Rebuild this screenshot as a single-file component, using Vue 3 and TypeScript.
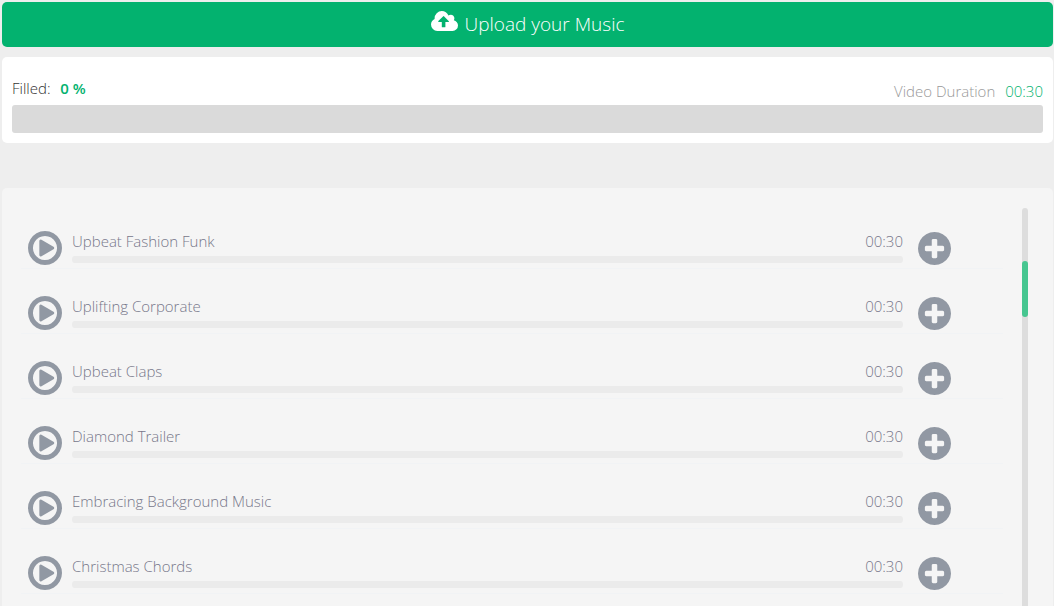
<script setup lang="ts">
interface Track {
  title: string
  duration: string
}

const filled = 0
const videoDuration = '00:30'
const tracks: Track[] = [
  { title: 'Upbeat Fashion Funk', duration: '00:30' },
  { title: 'Uplifting Corporate', duration: '00:30' },
  { title: 'Upbeat Claps', duration: '00:30' },
  { title: 'Diamond Trailer', duration: '00:30' },
  { title: 'Embracing Background Music', duration: '00:30' },
  { title: 'Christmas Chords', duration: '00:30' },
]
</script>

<template>
  <main class="page">
    <button type="button" class="upload">
      <svg class="upload-icon" viewBox="0 0 1920 1408" aria-hidden="true">
        <path
          d="M1280 736q0-14-9-23L919 361q-9-9-23-9t-23 9L522 712q-10 12-10 24 0 14 9 23t23 9h224v352q0 13 9.500 22.500T800 1152h192q13 0 22.500-9.500t9.500-22.500V768h224q13 0 22.500-9.500T1280 736zm640 288q0 159-112.500 271.500T1536 1408H448q-185 0-316.500-131.500T0 960q0-130 70-240t188-165q-2-30-2-43 0-212 150-362T768 0q156 0 285.500 87T1242 318q71-62 166-62 106 0 181 75t75 181q0 76-41 138 130 31 213.500 135.500T1920 1024z"
        />
      </svg>
      <span>Upload your Music</span>
    </button>

    <section class="summary">
      <div class="summary-head">
        <p class="filled">Filled: <strong>{{ filled }} %</strong></p>
        <p class="duration">Video Duration <span>{{ videoDuration }}</span></p>
      </div>
      <div class="meter" role="progressbar" aria-label="Filled" :aria-valuenow="filled">
        <div class="meter-fill" :style="{ width: filled + '%' }"></div>
      </div>
    </section>

    <section class="library">
      <ul class="tracks">
        <li v-for="track in tracks" :key="track.title" class="track">
          <button type="button" class="icon-button" :aria-label="'Play ' + track.title">
            <svg viewBox="0 0 1536 1536" aria-hidden="true">
              <path
                d="M1184 768q0 37-32 55l-544 320q-15 9-32 9-16 0-32-8-32-19-32-56V448q0-37 32-56 33-18 64 1l544 320q32 18 32 55zm128 0q0-148-73-273t-198-198-273-73-273 73-198 198-73 273 73 273 198 198 273 73 273-73 198-198 73-273zm224 0q0 209-103 385.500T1153.500 1433 768 1536t-385.500-103T103 1153.500 0 768t103-385.500T382.500 103 768 0t385.500 103T1433 382.500 1536 768z"
              />
            </svg>
          </button>
          <div class="track-body">
            <div class="track-text">
              <span>{{ track.title }}</span>
              <span>{{ track.duration }}</span>
            </div>
            <div class="track-bar"></div>
          </div>
          <button type="button" class="icon-button add" :aria-label="'Add ' + track.title">
            <svg viewBox="0 0 1536 1536" aria-hidden="true">
              <path
                d="M1216 832V704q0-26-19-45t-45-19H896V384q0-26-19-45t-45-19H704q-26 0-45 19t-19 45v256H384q-26 0-45 19t-19 45v128q0 26 19 45t45 19h256v256q0 26 19 45t45 19h128q26 0 45-19t19-45V896h256q26 0 45-19t19-45zm320-64q0 209-103 385.500T1153.500 1433 768 1536t-385.500-103T103 1153.500 0 768t103-385.500T382.500 103 768 0t385.500 103T1433 382.500 1536 768z"
              />
            </svg>
          </button>
        </li>
      </ul>
      <div class="scroll-track">
        <div class="scroll-thumb"></div>
      </div>
    </section>
  </main>
</template>

<style>
body {
  background: #eee;
}
</style>

<style scoped>
.page {
  box-sizing: border-box;
  display: flex;
  flex-direction: column;
  height: 100vh;
  padding: 2px 1px 0 2px;
  overflow: hidden;
  font-family: "Open Sans", "Noto Sans", sans-serif;
  font-size: 15px;
  font-weight: 300;
  line-height: 20px;
}

button {
  padding: 0;
  border: 0;
  font: inherit;
  cursor: pointer;
}

.upload {
  display: flex;
  flex: none;
  align-items: center;
  justify-content: center;
  gap: 7px;
  height: 45px;
  padding-bottom: 2px;
  border-radius: 5px;
  background: #03b26f;
  color: #fff;
  font-size: 19px;
}

.upload-icon {
  width: 27px;
  height: 20px;
  margin-bottom: 5px;
  fill: currentColor;
}

.summary {
  flex: none;
  margin-top: 10px;
  padding: 21px 10px 10px;
  border-radius: 5px;
  background: #fff;
}

.summary-head {
  display: flex;
  justify-content: space-between;
}

.summary p {
  margin: 0;
}

.filled {
  color: #333;
}

.filled strong {
  margin-left: 6px;
  color: #03b26f;
  font-weight: 600;
}

.summary .duration {
  padding-top: 3px;
  padding-bottom: 4px;
  color: #999;
}

.duration span {
  margin-left: 6px;
  color: #03b26f;
}

.meter {
  height: 28px;
  overflow: hidden;
  border-radius: 3px;
  background: #dadada;
}

.meter-fill {
  height: 100%;
  background: #03b26f;
}

.library {
  display: flex;
  flex: 1;
  align-items: stretch;
  min-height: 0;
  margin-top: 45px;
  padding: 16px 25px 0 19px;
  border-radius: 5px 5px 0 0;
  background: #f5f5f5;
}

.tracks {
  flex: 1;
  margin: 0;
  padding: 0;
  list-style: none;
}

.track {
  box-sizing: border-box;
  display: flex;
  align-items: flex-start;
  height: 65px;
  padding: 27px 52px 0 7px;
  border-bottom: 1px solid #f1f3f5;
}

.icon-button {
  flex: none;
  width: 34px;
  height: 34px;
  background: none;
  color: #9198a3;
}

.icon-button.add {
  width: 33px;
  height: 33px;
  margin-top: 1px;
}

.icon-button svg {
  display: block;
  width: 100%;
  fill: currentColor;
}

.track-body {
  flex: 1;
  margin: 0 15px 0 10px;
}

.track-text {
  display: flex;
  justify-content: space-between;
  height: 25px;
  color: #77778a;
}

.track-bar {
  height: 7px;
  border-radius: 3px;
  background: #ebebeb;
}

.scroll-track {
  flex: none;
  width: 6px;
  margin: 4px 0 0 19px;
  border-radius: 3px 3px 0 0;
  background: #ddd;
}

.scroll-thumb {
  height: 56px;
  margin-top: 53px;
  border-radius: 3px;
  background: #46c690;
}
</style>
